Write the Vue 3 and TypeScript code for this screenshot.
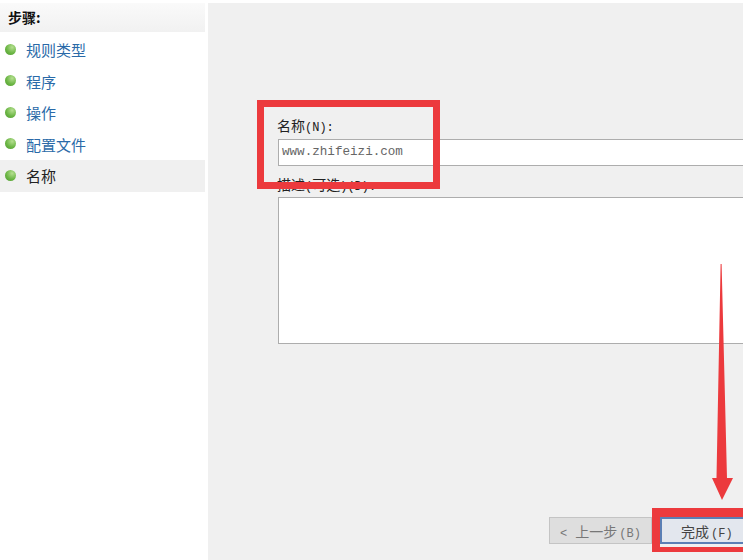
<script setup lang="ts">
const steps: { label: string; active?: boolean }[] = [
  { label: '规则类型' },
  { label: '程序' },
  { label: '操作' },
  { label: '配置文件' },
  { label: '名称', active: true },
]
</script>

<template>
  <div class="shot">
    <aside class="side">
      <div class="side-head">步骤:</div>
      <ul class="steps">
        <li v-for="s in steps" :key="s.label" class="step" :class="{ active: s.active }">
          <span class="dot"></span>
          <span class="step-label">{{ s.label }}</span>
        </li>
      </ul>
    </aside>
    <main class="main">
      <label class="field-label name-label">名称<span class="latin">(N):</span></label>
      <div class="input">www.zhifeizi.com</div>
      <label class="field-label desc-label">描述<span class="latin">(</span>可选<span class="latin">)(D):</span></label>
      <div class="textarea"></div>
      <div class="spacer"></div>
      <div class="buttons">
        <button class="btn prev" type="button"><span class="latin chev">&lt;</span>上一步<span class="latin gap">(B)</span></button>
        <button class="btn finish" type="button">完成<span class="latin gap">(F)</span></button>
      </div>
    </main>
    <div class="red-box box-name"></div>
    <div class="red-box box-finish"></div>
    <svg class="arrow" width="30" height="240" viewBox="0 0 30 240">
      <path d="M13.6 0 L9.5 214 L5 214 L15 236 L26 214 L20 214 L14.6 0 Z" fill="#ec3a3d" />
    </svg>
  </div>
</template>

<style>
html, body { margin: 0; background: #fff; }
</style>

<style scoped>
.shot {
  position: relative;
  width: 743px;
  height: 560px;
  overflow: hidden;
  display: flex;
  background: #fff;
  padding-top: 3px;
  box-sizing: border-box;
  font-family: "Noto Sans CJK SC", "Liberation Sans", sans-serif;
}
.side {
  width: 205px;
  margin-right: 3px;
  flex: none;
  box-sizing: border-box;
}
.side-head {
  height: 29px;
  line-height: 28px;
  padding-left: 8px;
  font-size: 14px;
  font-weight: 700;
  color: #111;
  background: linear-gradient(#fafafa, #f1f1f1);
}
.steps {
  list-style: none;
  margin: 2px 0 0;
  padding: 0;
}
.step {
  height: 31.5px;
  display: flex;
  align-items: center;
  padding-left: 5px;
  font-size: 15px;
  color: #2a6aa8;
}
.step.active {
  background: #f0f0f0;
  color: #222;
}
.dot {
  width: 11px;
  height: 11px;
  border-radius: 50%;
  margin-right: 10px;
  margin-top: -1px;
  background: radial-gradient(circle at 65% 30%, #b5df90, #6cb645 55%, #4e9a30);
}
.main {
  flex: 1;
  min-width: 0;
  background: #f0f0f0;
  display: flex;
  flex-direction: column;
  padding: 112px 0 16px 70px;
  box-sizing: border-box;
}
.field-label {
  font-size: 14px;
  line-height: 20px;
  color: #222;
}
.latin {
  font-family: "Liberation Mono", monospace;
  font-size: 12px;
}
.name-label { margin-left: -1px; height: 20px; }
.desc-label { margin-top: 6px; margin-left: -1px; height: 25px; line-height: 24px; }
.input {
  height: 27px;
  box-sizing: border-box;
  margin-top: 4px;
  margin-right: -20px;
  background: #fff;
  border: 1px solid #adadad;
  padding-left: 3px;
  font-family: "Liberation Mono", monospace;
  font-size: 12.6px;
  line-height: 25px;
  color: #666;
}
.textarea {
  height: 147px;
  box-sizing: border-box;
  margin-right: -20px;
  background: #fff;
  border: 1px solid #adadad;
}
.spacer { flex: 1; }
.buttons {
  display: flex;
  margin-right: -60px;
  margin-left: 271px;
}
.btn {
  height: 27px;
  padding: 0;
  font-family: "Noto Sans CJK SC", sans-serif;
  font-size: 14px;
  box-sizing: border-box;
}
.chev { margin-right: 8px; }
.gap { margin-left: 2px; font-size: 12px; }
.prev {
  width: 103px;
  background: #dedede;
  border: 1px solid #c4c4c4;
  color: #777;
}
.finish {
  width: 110px;
  margin-left: 8px;
  background: #e3e7ee;
  border: 2px solid #5b7fb5;
  color: #444;
  text-align: left;
  padding-left: 19px;
}
.red-box {
  position: absolute;
  box-sizing: border-box;
  border: 7px solid #ec3a3d;
}
.box-name {
  left: 257px;
  top: 100px;
  width: 183px;
  height: 89px;
}
.box-finish {
  left: 652px;
  top: 508px;
  width: 120px;
  height: 44px;
  border-width: 9px 8px 5px 8px;
}
.arrow {
  position: absolute;
  left: 707px;
  top: 264px;
}
</style>
